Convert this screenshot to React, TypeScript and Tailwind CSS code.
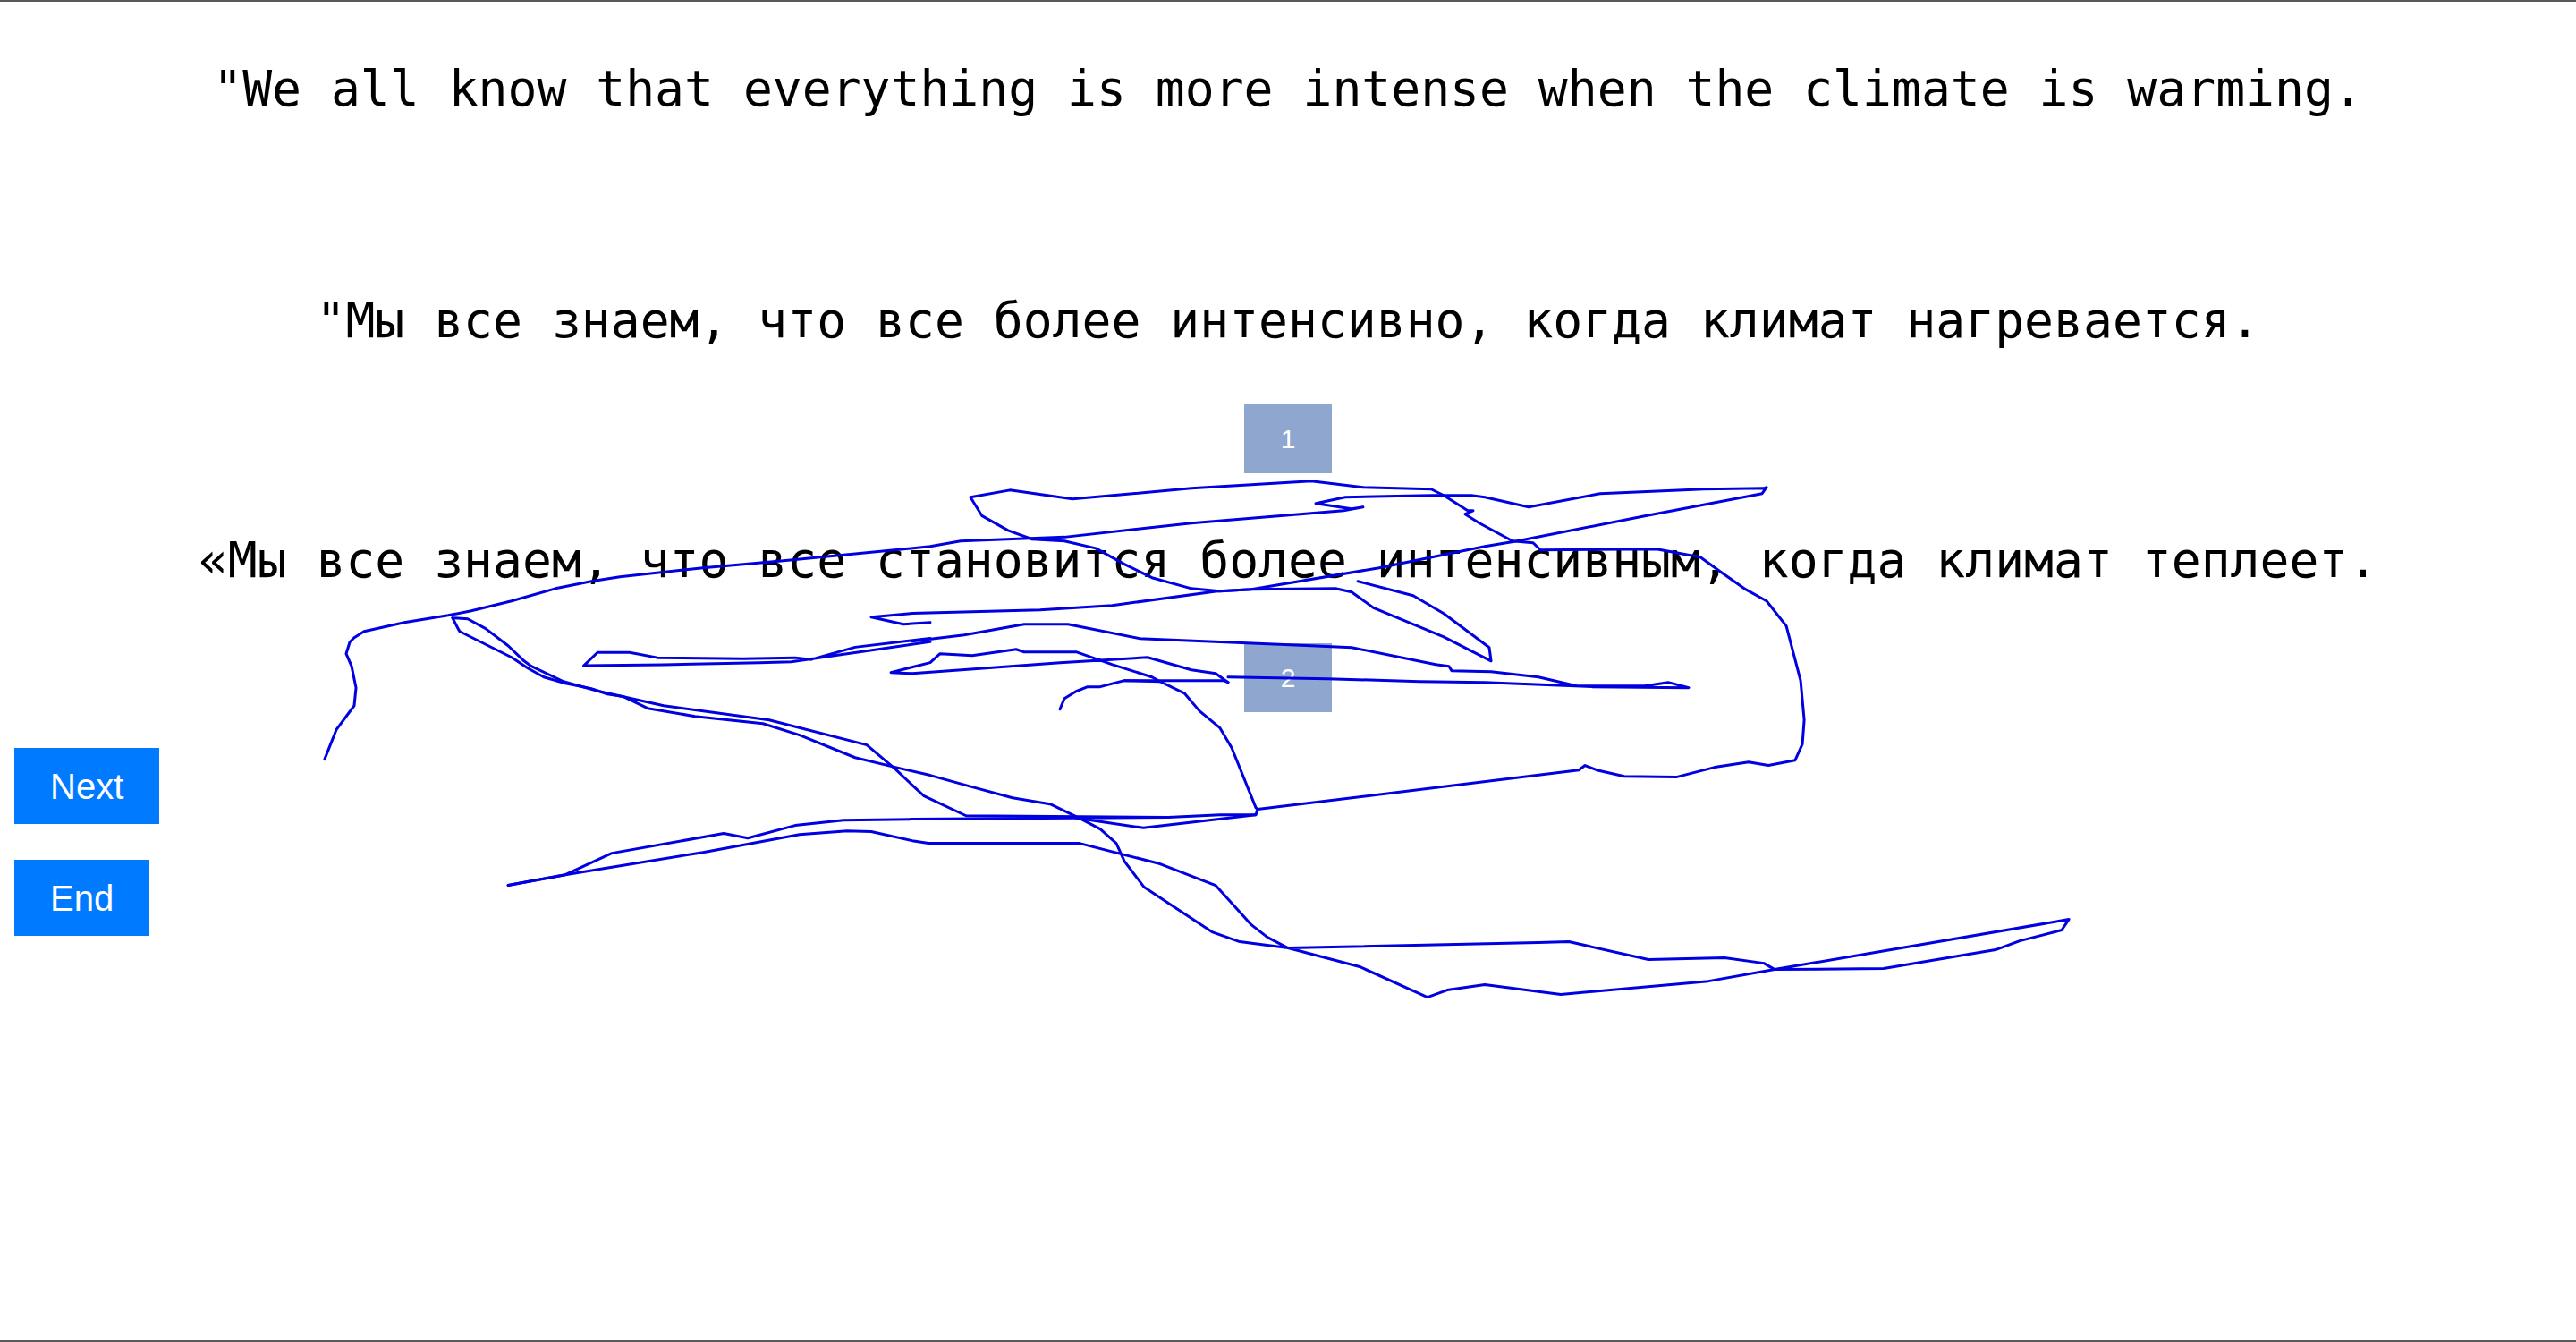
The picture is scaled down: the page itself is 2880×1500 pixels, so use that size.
import React from "react";

// pen strokes, traced in a 1568x817 grid that is stretched over the whole page
const STROKES: string[] = [
  "197.6,462.2 204.7,444.3 215.6,429.6 216.7,418.7 214,405.6 210.7,398 212.9,390.9 215.6,388.2 221.6,384.4 246.1,379 272.8,374.6 286.9,371.9 311.4,365.9 338.1,358.3 359.9,353.9 377.3,351.2 427.9,345.7 476.9,341.4 566.2,332.7 584.7,329.4 647.9,327 725.2,318.5 817.8,310.9 829.7,308.7 822.7,309.8 800.9,306.5 818.8,302.7 871.1,301.6 895.6,301.6 903.8,302.7 930.5,308.7 974,300.5 1037.2,297.8 1073.7,297.3 1075.3,296.7 1072.6,300.5 1001.2,314.1 923.4,329.4 903.8,332.7 839.5,345.7 761.7,358.8 740,360 677,368.6 633,371.3 555.3,373.4 530.3,375.7 549.9,380 566.2,378.9",
  "628.3,328.3 613.6,322.9 597.8,314.1 590.7,302.7 614.7,298.4 652.8,303.8 725.2,297.3 798.2,292.9 829.7,296.7 871.1,297.8 878.8,301.6 893.4,310.9 896.7,310.9 891.8,313 900.5,318.5 920.7,329.4 933.2,330.5 937.6,334.8 1008.3,334.3 1035,339.2 1047,347.9 1061.7,358.3 1075.3,365.9 1087.3,381.1 1096,414.3 1098.2,438.3 1097.1,453 1092.7,462.8 1076.4,466 1064.4,463.9 1043.7,467.1 1020.3,473.1 988.7,472.6 971.9,468.8 964.8,466 961,468.8 765.5,492.7 764.4,496 742.6,496 711.1,497.6 555.3,498.7 513.4,499.3 484,502.5 455.2,510.2 440.5,507.4 372.4,519.4 344.1,532.5 309.3,539",
  "628.3,328.3 647.9,329.4 667,333.8 684.4,343.5 701.2,351.7 725.2,358.3 742.6,359.9 761.7,358.8 812.9,358.3 822.7,360.4 836.3,370.2 878.8,387.7 907.6,402.4 906.5,394.2 878.8,373.5 860.2,362.6 826.5,353.9",
  "566.2,388.6 520.5,394 493.8,401.5 484,400.4 452.4,401 400.2,400.4 383.2,397.2 363.7,397.2 355.3,405.3 403.9,404.7 462.2,403.4 481.6,402.9 566.2,390.7",
  "555.3,390.4 586.9,386.6 623.4,380 650.1,380 693.6,388.7 798.2,393.1 822.7,394.2 873.9,404.5 882,405.6 883.6,408.3 907.6,408.9 936.4,412.2 959.9,417.6 1001.2,417.6 1015.4,415.4 1027.9,418.7 969.1,418.1 903.8,415.4 864,414.9 808,413.2 747.5,412.2",
  "747.5,415.4 740,410 725.2,407.8 698.5,400.2 645.2,403.4 555.3,410 542.3,409.4 566.2,403.4 572.2,398 591.8,399.1 618.5,395.3 623.4,396.9 655,396.9 676.8,404.5 701.2,412.2 706.1,414.9",
  "645.2,431.8 647.9,425.2 655,420.9 662,418.1 669.7,418.1 684.4,414.3 706.1,414.9 720.9,422 730.1,432.8 742.6,443.2 749.7,455.2 764.4,491.6 765.5,492.7",
  "684.4,414.3 744.8,414.3 747.5,415.4",
  "275.5,376.2 278.8,382.7 279.8,384.4 311.4,400.2 321.2,406.7 331,412.2 344.1,416 359.9,419.2 369.7,422.5 379.5,424.1 394.2,431.2 423,436.1 464.4,440.5 486.7,447.5 520.5,461.2 545,467.1 566.2,472 591.8,479.1 616.3,485.7 639.2,489.5 657.2,498.2 669.7,504.7 679.5,513.4 684.4,524.3 696.4,540.1 737.7,567.3 754.6,573.3 784,577.1 936.4,573.8 955,573.3 1003.4,584.2 1049.7,583.1 1073.7,586.4 1080.2,590.2 1146.6,589.6 1214.7,578.2 1229.4,572.8 1255,566.2 1259.3,559.7 1080.2,590.2 1039.9,597.3 950.1,605.4 903.8,599.4 880.9,602.7 868.9,607.1 827.6,588.5 784,577.1 771.5,570.6 761.7,563 739.9,539 706.1,525.9 657.2,513.4 565.1,513.4 555.3,511.8 530.3,506.3 515.6,505.8 486.7,508 427.9,518.9 344.1,532.5 309.3,539",
  "275.5,376.2 284.7,376.8 295.6,382.7 309.3,393.1 319,402.4 323.4,405.6 343,414.9 364.8,420.9 404,429.6 468.2,438.3 527.6,453.5 545,468.2 555.3,478 562.4,484.5 588,496.6 711.1,497.6",
  "655,498 696,504 764.4,496",
];

function NumberBox({ n }: { n: number }) {
  return (
    <div className="flex h-[77px] w-[98px] items-center justify-center bg-[#8fa6cf] font-['Liberation_Sans',Arial,sans-serif] text-[30px] leading-none text-white">
      {n}
    </div>
  );
}

const line = "whitespace-pre font-['DejaVu_Sans_Mono',monospace] text-[54.7px] leading-[64px] text-black";

export default function App() {
  return (
    <div className="relative h-[1500px] w-full overflow-hidden border-y-2 border-[#5a5a5a] bg-white">
      <div className="flex flex-col items-center">
        <p className={`mt-[65px] ${line}`}>
          "We all know that everything is more intense when the climate is warming.
        </p>
        <p className={`mt-[195px] ${line}`}>
          "Мы все знаем, что все более интенсивно, когда климат нагревается.
        </p>
        <div className="mt-[62px]">
          <NumberBox n={1} />
        </div>
        <p className={`mt-[65px] ${line}`}>
          «Мы все знаем, что все становится более интенсивным, когда климат теплеет.
        </p>
        <div className="mt-[61px]">
          <NumberBox n={2} />
        </div>
        <div className="mt-[40px] flex flex-col items-start gap-[40px] self-start pl-4 font-['Liberation_Sans',Arial,sans-serif]">
          <button type="button" className="flex h-[85px] items-center bg-[#007bff] px-[40px] text-[40px] text-white">
            Next
          </button>
          <button type="button" className="flex h-[85px] items-center bg-[#007bff] px-[40px] text-[40px] text-white">
            End
          </button>
        </div>
      </div>

      <svg
        className="pointer-events-none absolute left-0 top-[-2px] h-[1500px] w-full"
        viewBox="0 0 1568 817"
        preserveAspectRatio="none"
      >
        {STROKES.map((pts, i) => (
          <polyline
            key={i}
            points={pts}
            fill="none"
            stroke="#0000e0"
            strokeWidth={3}
            strokeLinejoin="round"
            strokeLinecap="round"
            vectorEffect="non-scaling-stroke"
          />
        ))}
      </svg>
    </div>
  );
}
